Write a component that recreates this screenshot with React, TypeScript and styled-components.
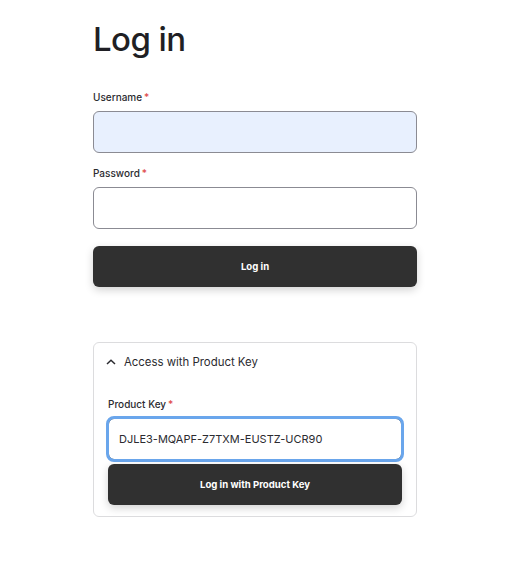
import React from 'react';
import styled, { createGlobalStyle } from 'styled-components';

const GlobalStyle = createGlobalStyle`
  body {
    margin: 0;
    background: #fff;
    font-family: Inter, "Noto Sans", sans-serif;
    color: #1f1f24;
  }
`;

const Page = styled.div`
  width: 324px;
  margin-left: 93px;
  padding-top: 18px;
  display: flex;
  flex-direction: column;
`;

const Title = styled.h1`
  margin: 0 0 31px;
  font-size: 33px;
  font-weight: 500;
  letter-spacing: -0.6px;
  line-height: 42px;
  color: #1f1f24;
`;

const Form = styled.form`
  display: flex;
  flex-direction: column;
`;

const Field = styled.div`
  display: flex;
  flex-direction: column;
  margin-bottom: 14px;
`;

const Label = styled.label`
  font-size: 10px;
  font-weight: 500;
  color: #2b2b30;
  line-height: 13px;
  margin-bottom: 7px;
`;

const Required = styled.span`
  color: #e04848;
  margin-left: 2px;
`;

const Input = styled.input<{ $autofill?: boolean; $focused?: boolean }>`
  box-sizing: border-box;
  height: 42px;
  width: 100%;
  padding: 0 10px;
  border-radius: 6px;
  border: 1px solid ${(p) => (p.$focused ? '#3a3a3a' : '#8b8b93')};
  background: ${(p) => (p.$autofill ? '#e8f0fe' : '#fff')};
  font-family: Inter, "Noto Sans", sans-serif;
  font-size: 11px;
  color: #2b2b30;
  outline: ${(p) => (p.$focused ? '3px solid #6aa6ec' : 'none')};
  outline-offset: -1px;
`;

const PrimaryButton = styled.button<{ $compact?: boolean }>`
  height: 41px;
  width: 100%;
  border: none;
  border-radius: 6px;
  background: #303030;
  color: #fff;
  font-family: Inter, "Noto Sans", sans-serif;
  font-size: 9.6px;
  font-weight: 700;
  box-shadow: 0 3px 8px rgba(0, 0, 0, 0.18);
  cursor: pointer;
  margin-top: ${(p) => (p.$compact ? '4px' : '3px')};
`;

const Card = styled.div`
  margin-top: 55px;
  border: 1px solid #dcdcde;
  border-radius: 6px;
  padding: 0 14px 11px;
`;

const CardHeader = styled.div`
  display: flex;
  align-items: center;
  gap: 8px;
  height: 38px;
  margin-left: -2px;
  font-size: 11.4px;
  font-weight: 400;
  color: #2b2b30;
`;

const CardBody = styled.div`
  padding-top: 17px;
  display: flex;
  flex-direction: column;
`;

const KeyLabel = styled(Label)`
  margin-bottom: 7px;
`;

export default function App() {
  return (
    <>
      <GlobalStyle />
      <Page>
        <Title>Log in</Title>
        <Form onSubmit={(e) => e.preventDefault()}>
          <Field>
            <Label>
              Username<Required>*</Required>
            </Label>
            <Input $autofill />
          </Field>
          <Field>
            <Label>
              Password<Required>*</Required>
            </Label>
            <Input type="password" />
          </Field>
          <PrimaryButton type="submit">Log in</PrimaryButton>
        </Form>
        <Card>
          <CardHeader>
            <svg width="10" height="10" viewBox="0 0 10 10">
              <path d="M1 7 L5 3.2 L9 7" fill="none" stroke="#2b2b30" strokeWidth="1.5" />
            </svg>
            Access with Product Key
          </CardHeader>
          <CardBody>
            <KeyLabel>
              Product Key<Required>*</Required>
            </KeyLabel>
            <Input $focused defaultValue="DJLE3-MQAPF-Z7TXM-EUSTZ-UCR90" />
            <PrimaryButton $compact>Log in with Product Key</PrimaryButton>
          </CardBody>
        </Card>
      </Page>
    </>
  );
}
